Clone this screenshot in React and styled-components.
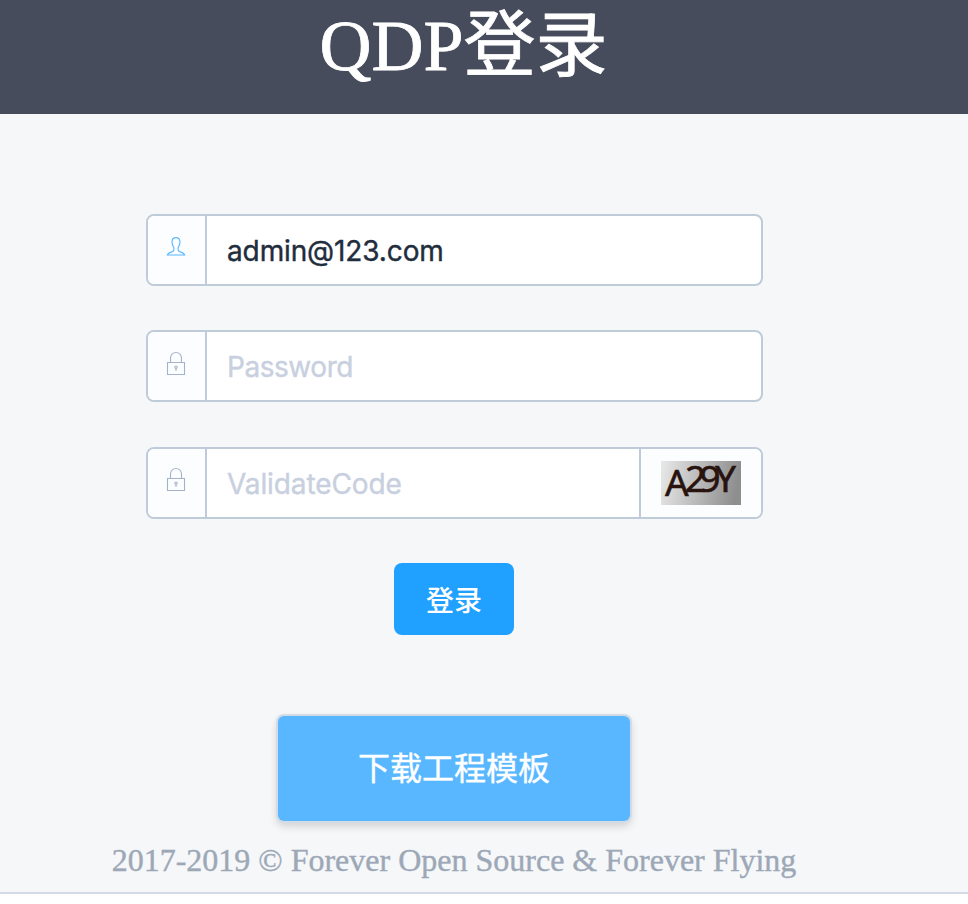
import React from 'react';
import styled, { createGlobalStyle } from 'styled-components';

const GlobalStyle = createGlobalStyle`
  * { box-sizing: border-box; }
  body { margin: 0; background: #fff; font-family: Inter, "Noto Sans CJK SC", sans-serif; }
`;

const Page = styled.div`
  height: 894px;
  overflow: hidden;
  display: flex;
  flex-direction: column;
  background: #f5f7f9;
  border-bottom: 2px solid #d3dce6;
`;

const Header = styled.header`
  height: 114px;
  flex: none;
  background: #474c5c;
`;

const Title = styled.h1`
  margin: 0;
  width: 927px;
  height: 92px;
  text-align: center;
  font: 400 72px/92px "Liberation Serif", "Noto Sans CJK SC", serif;
  color: #fff;
  -webkit-text-stroke: 0.8px #fff;
  white-space: nowrap;
`;

const Form = styled.form`
  width: 908px;
  padding-top: 100px;
  display: flex;
  flex-direction: column;
  align-items: center;
`;

const Field = styled.div`
  width: 617px;
  height: 72px;
  margin-bottom: ${(p) => p.$gap}px;
  margin-left: 1px;
  display: flex;
  border: 2px solid #bfcbd9;
  border-radius: 8px;
  background: #fff;
  overflow: hidden;
`;

const Prepend = styled.span`
  width: 59px;
  flex: none;
  display: flex;
  padding: ${(p) => p.$top}px 0 0 14px;
  border-right: 2px solid #bfcbd9;
  background: #fbfdff;
  color: ${(p) => (p.$active ? '#58b7ff' : '#a3b4c8')};
`;

const Append = styled.span`
  width: 122px;
  flex: none;
  display: flex;
  padding: 12px 0 0 20px;
  border-left: 2px solid #bfcbd9;
  background: #fbfdff;
`;

const Input = styled.input`
  flex: 1;
  min-width: 0;
  padding: 2px 20px 0;
  border: 0;
  outline: 0;
  background: transparent;
  font: 400 28px Inter, sans-serif;
  letter-spacing: ${(p) => p.$spacing}px;
  color: #1f2d3d;
  -webkit-text-stroke: 0.4px currentColor;
  &::placeholder { color: #c8d0df; opacity: 1; }
`;

const Icon = styled.svg`
  width: 28px;
  height: 28px;
  fill: none;
  stroke: currentColor;
  stroke-width: 1.1;
`;

const Captcha = styled.svg`
  width: 80px;
  height: 44px;
`;

const CaptchaText = styled.text`
  font: 400 37px "Noto Sans", sans-serif;
  fill: #28130f;
  stroke: #28130f;
  stroke-width: 0.6;
`;

const LoginButton = styled.button`
  width: 120px;
  height: 72px;
  padding: 0;
  border: 0;
  border-radius: 8px;
  background: #20a0ff;
  color: #fff;
  font: 500 28px/72px "Noto Sans CJK SC", sans-serif;
`;

const DownloadButton = styled.button`
  width: 352px;
  height: 105px;
  margin-top: 81px;
  padding: 0 0 4px;
  border: 0;
  border-radius: 6px;
  background: #58b7ff;
  box-shadow: 0 0 0 2px #d3dce6, 0 4px 8px 1px rgba(0, 0, 0, 0.16);
  color: #fff;
  -webkit-text-stroke: 0.4px #fff;
  font: 400 32px/101px "Noto Sans CJK SC", sans-serif;
`;

const Footer = styled.footer`
  width: 908px;
  margin-top: 20px;
  text-align: center;
  font: 400 32px/38px "Liberation Serif", serif;
  color: #9da8b7;
  -webkit-text-stroke: 0.4px #9da8b7;
  white-space: nowrap;
`;

const UserIcon = () => (
  <Icon viewBox="0 0 28 28">
    <path d="M14 4.6C11.3 4.6 10 6.5 10 9c0 2 .7 3.5 1.5 4.8.8 1.3.5 4-.7 4.7-1.6.9-4.6.8-5.5 3.500h17.400c-.9-2.700-3.900-2.600-5.500-3.500-1.200-.7-1.500-3.400-.7-4.700.8-1.300 1.500-2.800 1.500-4.800 0-2.500-1.300-4.400-4-4.400z" />
  </Icon>
);

const LockIcon = () => (
  <Icon viewBox="0 0 28 28">
    <path d="M5.500 12.500h17v12h-17zM8.500 12.500V8a5.500 5.500 0 0 1 11 0v4.500" />
    <circle cx="14" cy="17.200" r="1.200" />
    <path d="M14 18.400v2.600" />
  </Icon>
);

const CaptchaImage = () => (
  <Captcha viewBox="0 0 80 44" role="img" aria-label="A29Y">
    <defs>
      <linearGradient id="captcha-bg" x1="0" y1="0" x2="1" y2="0.1">
        <stop offset="0" stopColor="#e9e9e9" />
        <stop offset="1" stopColor="#8e8e8e" />
      </linearGradient>
    </defs>
    <rect width="80" height="44" fill="url(#captcha-bg)" />
    <CaptchaText x="4 24 38.500 54" y="35 31 31 31">A29Y</CaptchaText>
  </Captcha>
);

export default function App() {
  return (
    <>
      <GlobalStyle />
      <Page>
        <Header>
          <Title>QDP登录</Title>
        </Header>
        <Form onSubmit={(e) => e.preventDefault()}>
          <Field $gap={44}>
            <Prepend $active $top={17}><UserIcon /></Prepend>
            <Input defaultValue="admin@123.com" $spacing={-0.12} />
          </Field>
          <Field $gap={45}>
            <Prepend $top={18}><LockIcon /></Prepend>
            <Input type="password" placeholder="Password" $spacing={-0.45} />
          </Field>
          <Field $gap={44}>
            <Prepend $top={17}><LockIcon /></Prepend>
            <Input placeholder="ValidateCode" $spacing={-0.1} />
            <Append><CaptchaImage /></Append>
          </Field>
          <LoginButton>登录</LoginButton>
          <DownloadButton type="button">下载工程模板</DownloadButton>
        </Form>
        <Footer>2017-2019 © Forever Open Source &amp; Forever Flying</Footer>
      </Page>
    </>
  );
}
